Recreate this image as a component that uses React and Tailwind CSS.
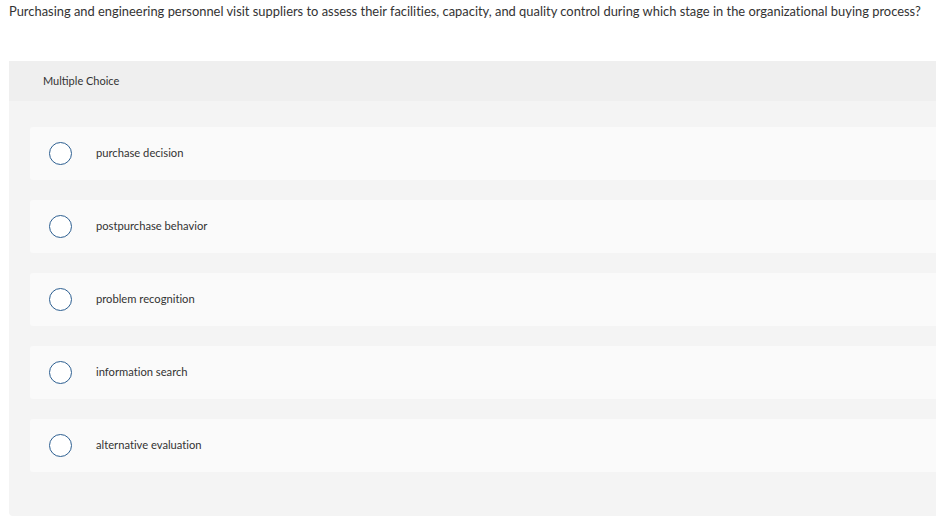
import React from 'react';

const OPTIONS = [
  'purchase decision',
  'postpurchase behavior',
  'problem recognition',
  'information search',
  'alternative evaluation',
];

const App = () => {
  return (
    <div className="w-[936px] h-[520px] bg-white overflow-hidden" style={{ fontFamily: 'Lato, "Open Sans", sans-serif' }}>
      {/* Question */}
      <p className="pl-[9px] pt-[3px] text-[12.9px] leading-[16px] text-[#333] [font-variant-ligatures:none]">
        Purchasing and engineering personnel visit suppliers to assess their facilities, capacity, and quality control during which stage in the organizational buying process?
      </p>

      {/* Panel */}
      <div className="ml-[9px] mt-[42px] h-[455px] bg-[#f4f4f4] rounded-bl-[4px] rounded-tl-[2px]">
        <div className="h-[40px] bg-[#efefef] flex items-center pl-[34px] text-[11px] text-[#333]">
          Multiple Choice
        </div>
        <div className="pt-[26px] pl-[21px] flex flex-col gap-[20px]">
          {OPTIONS.map((opt) => (
            <div key={opt} className="h-[53px] bg-[#fafafa] rounded-l-[3px] flex items-center">
              <span className="ml-[19px] w-[23px] h-[23px] rounded-full border-[1.5px] border-[#2d5f91] bg-white shrink-0" />
              <span className="ml-[24px] text-[11.2px] text-[#333] [font-variant-ligatures:none]">{opt}</span>
            </div>
          ))}
        </div>
      </div>
    </div>
  );
};

export default App;
